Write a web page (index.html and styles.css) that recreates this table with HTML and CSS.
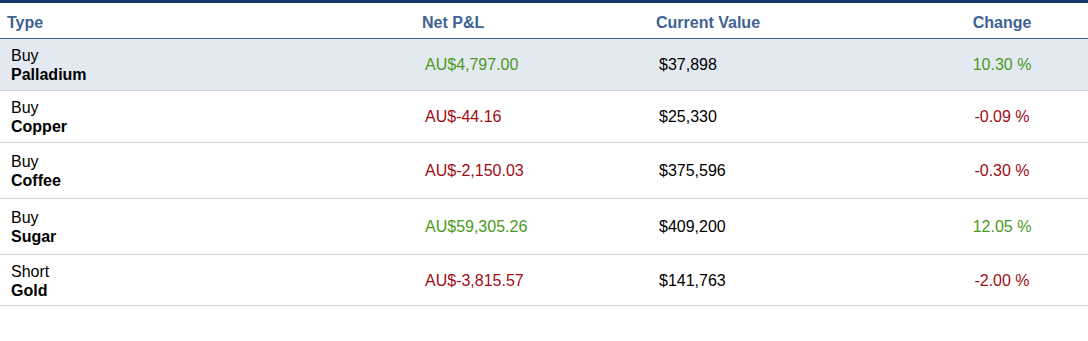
FILE: index.html
```html
<!DOCTYPE html>
<html lang="en">
<head>
<meta charset="utf-8">
<title>Positions</title>
<link rel="stylesheet" href="styles.css">
</head>
<body>
<div class="positions">
  <div class="row head">
    <div class="cell first">Type</div>
    <div class="cell">Net P&amp;L</div>
    <div class="cell">Current Value</div>
    <div class="cell change">Change</div>
  </div>
  <div class="row item selected">
    <div class="cell first"><span class="dir">Buy</span><span class="name">Palladium</span></div>
    <div class="cell pos">AU$4,797.00</div>
    <div class="cell">$37,898</div>
    <div class="cell change pos">10.30 %</div>
  </div>
  <div class="row item">
    <div class="cell first"><span class="dir">Buy</span><span class="name">Copper</span></div>
    <div class="cell neg">AU$-44.16</div>
    <div class="cell">$25,330</div>
    <div class="cell change neg">-0.09 %</div>
  </div>
  <div class="row item tall">
    <div class="cell first"><span class="dir">Buy</span><span class="name">Coffee</span></div>
    <div class="cell neg">AU$-2,150.03</div>
    <div class="cell">$375,596</div>
    <div class="cell change neg">-0.30 %</div>
  </div>
  <div class="row item tall">
    <div class="cell first"><span class="dir">Buy</span><span class="name">Sugar</span></div>
    <div class="cell pos">AU$59,305.26</div>
    <div class="cell">$409,200</div>
    <div class="cell change pos">12.05 %</div>
  </div>
  <div class="row item short">
    <div class="cell first"><span class="dir">Short</span><span class="name">Gold</span></div>
    <div class="cell neg">AU$-3,815.57</div>
    <div class="cell">$141,763</div>
    <div class="cell change neg">-2.00 %</div>
  </div>
</div>
</body>
</html>
```

FILE: styles.css
```css
html, body {
  margin: 0;
  padding: 0;
  background: #ffffff;
}

body {
  font-family: "Liberation Sans", Arial, Helvetica, sans-serif;
  font-size: 16px;
  line-height: 19px;
  color: #000000;
}

.positions {
  border-top: 3px solid #14386a;
}

.row {
  display: grid;
  grid-template-columns: 418px 234px 264px 172px;
  align-items: center;
}

.head {
  padding: 10px 0 6px;
  border-bottom: 1px solid #3d64a0;
  font-weight: bold;
  color: #3e6394;
}

.head .cell {
  padding-left: 4px;
}

.head .cell.first {
  padding-left: 7px;
}

.item {
  min-height: 51px;
  border-bottom: 1px solid #d2d2d2;
}

.item.tall {
  min-height: 55px;
}

.item.short {
  min-height: 50px;
}

.item.selected {
  background: #e3e9f1;
}

.item .cell {
  padding-left: 7px;
}

.item .cell.first {
  padding-left: 11px;
  padding-top: 1px;
  display: flex;
  flex-direction: column;
}

.cell.change,
.head .cell.change,
.item .cell.change {
  padding-left: 0;
  text-align: center;
}

.name {
  font-weight: bold;
}

.pos {
  color: #4c9a22;
}

.neg {
  color: #a00c15;
}
```
